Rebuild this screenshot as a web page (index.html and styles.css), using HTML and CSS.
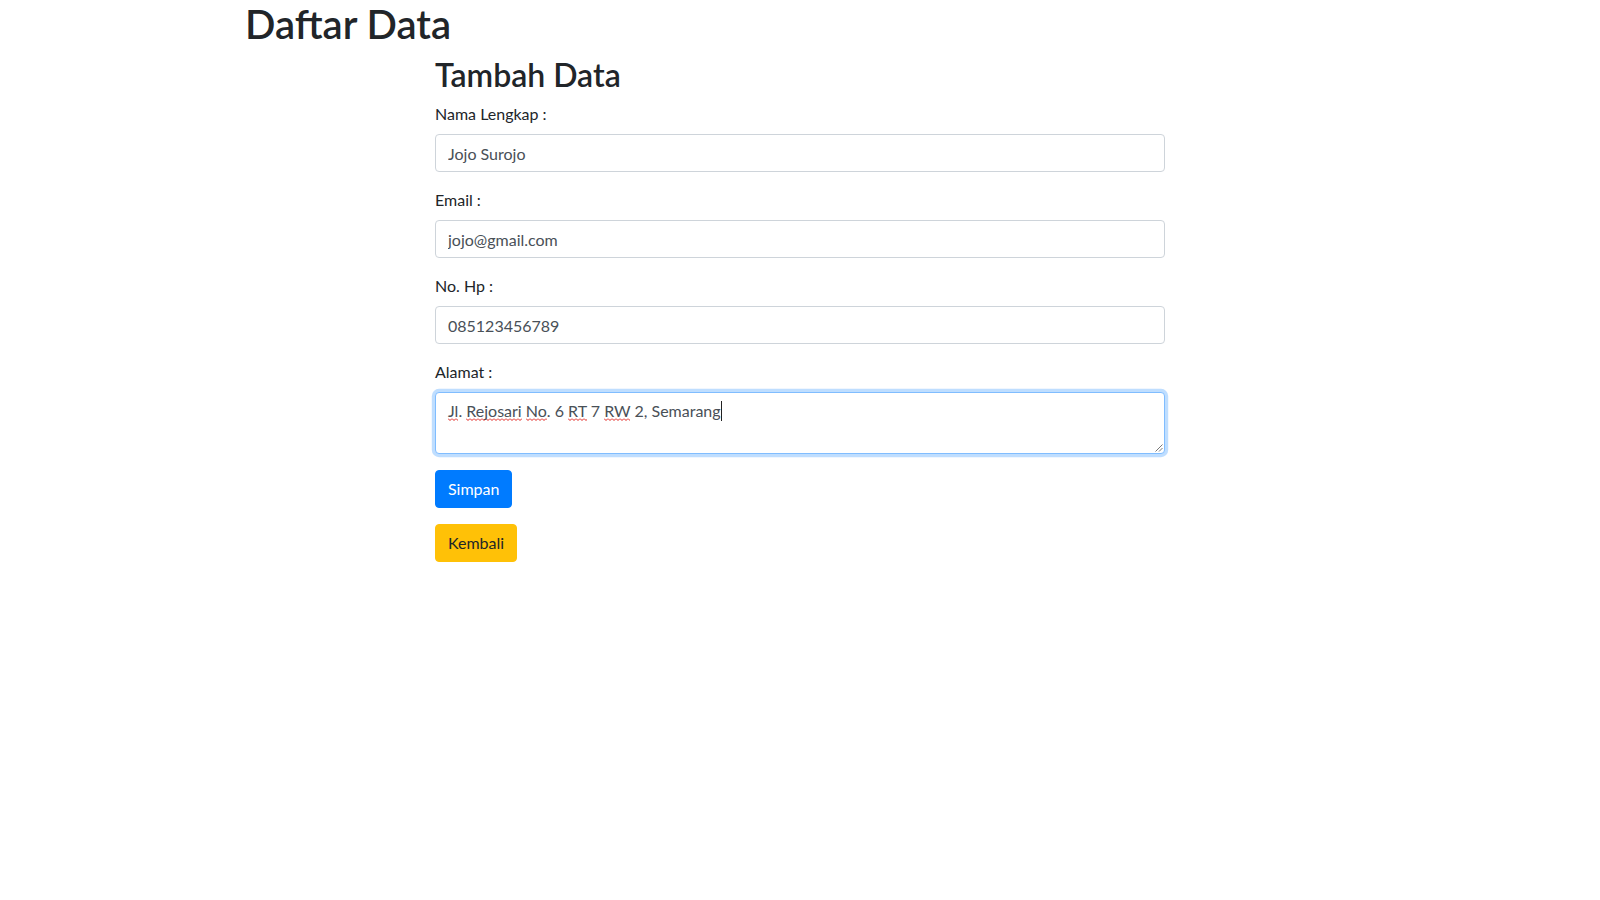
FILE: index.html
```html
<!DOCTYPE html>
<html lang="id">
<head>
<meta charset="utf-8">
<title>Daftar Data</title>
<link rel="stylesheet" href="styles.css">
</head>
<body>
<div class="container">
  <h1 class="title">Daftar Data</h1>
  <div class="row">
    <div class="col">
      <h2 class="subtitle">Tambah Data</h2>
      <form class="form">
        <div class="form-group">
          <label class="label">Nama Lengkap :</label>
          <input class="input" type="text" value="Jojo Surojo">
        </div>
        <div class="form-group">
          <label class="label">Email :</label>
          <input class="input" type="text" value="jojo@gmail.com">
        </div>
        <div class="form-group">
          <label class="label">No. Hp :</label>
          <input class="input" type="text" value="085123456789">
        </div>
        <div class="form-group">
          <label class="label">Alamat :</label>
          <div class="textarea focus"><span class="sp">Jl</span>. <span class="sp">Rejosari</span> <span class="sp">No</span>. 6 <span class="sp">RT</span> 7 <span class="sp">RW</span> 2, Semarang<span class="caret"></span><svg class="grip" width="9" height="9" viewBox="0 0 9 9"><path d="M8.5 1.5 L1.5 8.5 M8.5 5 L5 8.5" stroke="#777" stroke-width="1" fill="none"/></svg></div>
        </div>
        <div class="form-group">
          <button type="button" class="btn btn-primary">Simpan</button>
        </div>
        <button type="button" class="btn btn-warning">Kembali</button>
      </form>
    </div>
  </div>
</div>
</body>
</html>
```

FILE: styles.css
```css
* { box-sizing: border-box; }
html, body { margin: 0; padding: 0; background: #fff; }
body {
  font-family: Lato, "Noto Sans", sans-serif;
  font-size: 16px;
  line-height: 1.5;
  color: #212529;
}
.container {
  max-width: 1140px;
  margin: 0 auto;
  padding: 0 15px;
}
.title {
  font-size: 40px;
  font-weight: 600;
  line-height: 1.2;
  margin: 0 0 8px;
}
.row {
  display: flex;
  margin: 0 -15px;
}
.col {
  width: 66.6667%;
  margin-left: 16.6667%;
  padding: 0 15px;
}
.subtitle {
  font-size: 32px;
  font-weight: 600;
  line-height: 1.2;
  margin: 0 0 8px;
}
.form-group { margin-bottom: 16px; }
.label {
  display: inline-block;
  margin-bottom: 8px;
}
.input, .textarea {
  display: block;
  width: 100%;
  height: 38px;
  padding: 6px 12px;
  font: inherit;
  font-size: 16px;
  line-height: 1.5;
  color: #495057;
  background: #fff;
  border: 1px solid #ced4da;
  border-radius: 4px;
  outline: none;
}
.textarea {
  position: relative;
  height: 62px;
}
.textarea.focus {
  border-color: #80bdff;
  box-shadow: 0 0 0 3.2px rgba(0, 123, 255, 0.25);
}
.sp {
  background-image: url("data:image/svg+xml;utf8,<svg xmlns='http://www.w3.org/2000/svg' width='4' height='3'><path d='M0 0.5 L2 2.5 L4 0.5' stroke='%23e0201a' stroke-width='1' fill='none'/></svg>");
  background-repeat: repeat-x;
  background-position: 0 100%;
  background-size: 4px 3px;
  padding-bottom: 1px;
}
.caret {
  display: inline-block;
  width: 1px;
  height: 20px;
  background: #222;
  vertical-align: -4px;
}
.grip {
  position: absolute;
  right: 1px;
  bottom: 1px;
}
.btn {
  display: inline-block;
  font: inherit;
  font-size: 16px;
  line-height: 1.5;
  padding: 6px 12px;
  border: 1px solid transparent;
  border-radius: 4px;
  cursor: pointer;
}
.btn-primary {
  background: #007bff;
  border-color: #007bff;
  color: #fff;
}
.btn-warning {
  background: #ffc107;
  border-color: #ffc107;
  color: #212529;
}
```
